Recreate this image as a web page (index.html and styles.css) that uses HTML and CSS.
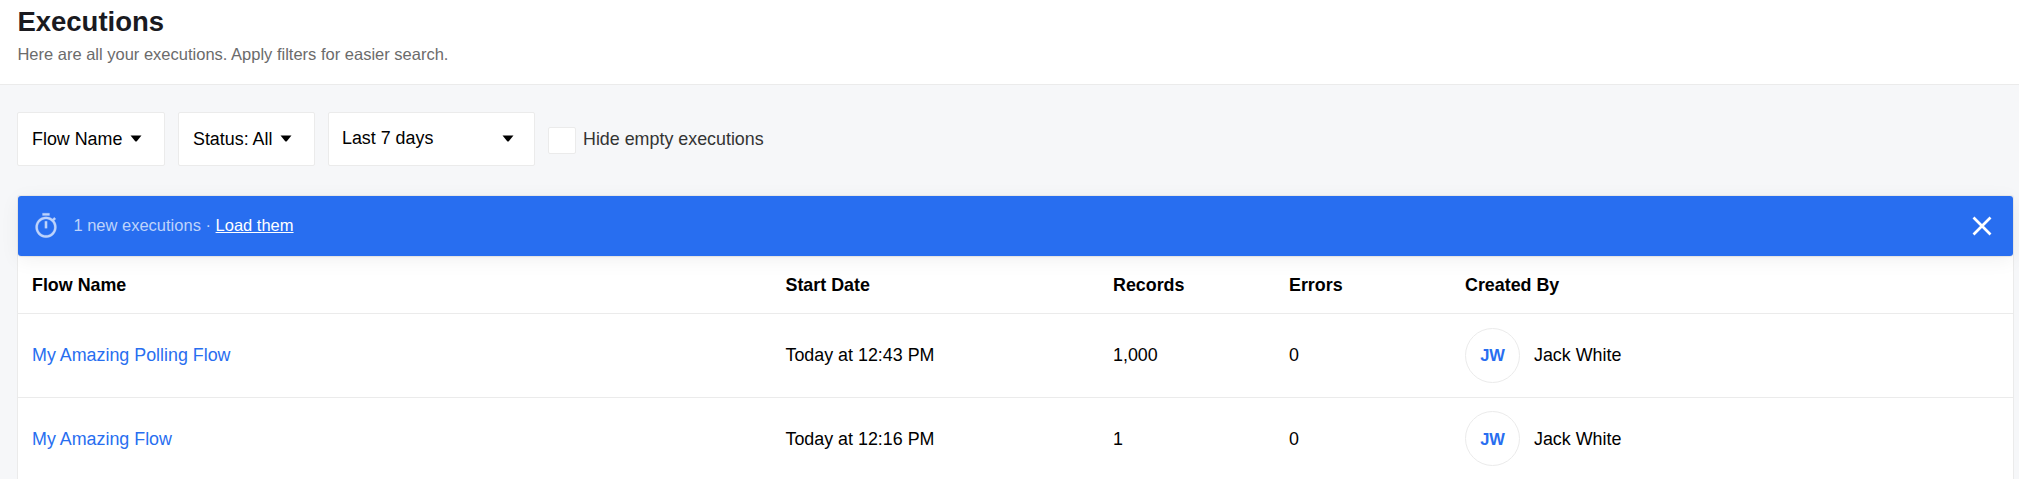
FILE: index.html
```html
<!DOCTYPE html>
<html lang="en">
<head>
<meta charset="utf-8">
<title>Executions</title>
<link rel="stylesheet" href="styles.css">
</head>
<body>
<header class="page-header">
  <h1 class="title">Executions</h1>
  <p class="subtitle">Here are all your executions. Apply filters for easier search.</p>
</header>
<main class="content">
  <div class="filters">
    <button class="filter filter-flow">Flow Name<svg class="caret" viewBox="0 0 12 7"><path d="M.5 .5h11L7 6Q6 7 5 6z"/></svg></button>
    <button class="filter filter-status">Status: All<svg class="caret" viewBox="0 0 12 7"><path d="M.5 .5h11L7 6Q6 7 5 6z"/></svg></button>
    <button class="filter filter-period"><span class="period">Last 7 days</span><svg class="caret" viewBox="0 0 12 7"><path d="M.5 .5h11L7 6Q6 7 5 6z"/></svg></button>
    <label class="toggle"><span class="box"></span>Hide empty executions</label>
  </div>
  <section class="panel">
    <div class="banner">
      <svg class="timer" viewBox="0 0 24 24"><path d="M15 1H9v2h6V1zm-4 13h2V8h-2v6zm8.03-6.61l1.42-1.42c-.43-.51-.9-.99-1.41-1.41l-1.42 1.42C16.07 4.74 14.12 4 12 4c-4.97 0-9 4.03-9 9s4.02 9 9 9 9-4.03 9-9c0-2.120-.74-4.070-1.97-5.610zM12 20c-3.870 0-7-3.130-7-7s3.130-7 7-7 7 3.130 7 7-3.130 7-7 7z"/></svg>
      <span class="message">1 new executions · <a class="load">Load them</a></span>
      <svg class="close" viewBox="0 0 20 20"><path d="M1.500 1.500l17 17M18.500 1.500l-17 17"/></svg>
    </div>
    <div class="row head">
      <span>Flow Name</span><span>Start Date</span><span>Records</span><span>Errors</span><span>Created By</span>
    </div>
    <div class="row">
      <a class="cell flow">My Amazing Polling Flow</a><span class="cell">Today at 12:43 PM</span><span class="cell">1,000</span><span class="cell">0</span>
      <span class="user"><span class="avatar">JW</span><span class="cell">Jack White</span></span>
    </div>
    <div class="row last">
      <a class="cell flow">My Amazing Flow</a><span class="cell">Today at 12:16 PM</span><span class="cell">1</span><span class="cell">0</span>
      <span class="user"><span class="avatar">JW</span><span class="cell">Jack White</span></span>
    </div>
  </section>
</main>
</body>
</html>
```
FILE: styles.css
```css
* { box-sizing: border-box; }
body {
  margin: 0;
  background: #f6f7f9;
  color: #000;
  font: 17.875px/22px "Liberation Sans", Arial, sans-serif;
}
.page-header {
  height: 85px;
  padding: 5px 17px 0 17.4px;
  background: #fff;
  border-bottom: 1px solid #ebebeb;
}
.title {
  margin: 0;
  color: #1a1a1f;
  font-size: 27.5px;
  line-height: 33px;
}
.subtitle {
  margin: 6px 0 0;
  color: #6b6b6b;
  font-size: 16.5px;
  line-height: 20px;
}
.content { padding: 27px 5px 0 17px; }
.filters { display: flex; gap: 13px; height: 54px; }
.filter {
  display: flex;
  align-items: center;
  padding: 0 14px;
  background: #fff;
  border: 1px solid #ebebeb;
  border-radius: 2px;
  color: #000;
  font: inherit;
}
.filter-flow { width: 148px; }
.filter-status { width: 137px; }
.filter-period { width: 207px; padding: 0 20.5px 0 13px; justify-content: space-between; }
.period { margin-top: -2px; }
.caret { width: 12px; height: 7px; margin: -1px 0 0 8px; }
.toggle { display: flex; align-items: center; gap: 7px; color: #333; }
.box {
  width: 28px;
  height: 27px;
  margin-top: 3px;
  background: #fff;
  border: 1px solid #ebebeb;
  border-radius: 2px;
}
.panel {
  margin-top: 29px;
  background: #fff;
  border: 1px solid #ebebeb;
  border-bottom: 0;
  border-radius: 3px 3px 0 0;
}
.banner {
  display: flex;
  align-items: center;
  height: 60px;
  padding: 0 21px 0 14px;
  background: #286ef0;
  border-radius: 3px;
  box-shadow: 0 1px 1px rgba(0, 0, 0, .08), 0 4px 20px rgba(0, 0, 0, .06);
  color: #bed3fb;
  font-size: 16.5px;
}
.timer { width: 28px; height: 28px; margin-top: -1px; fill: #bed3fb; stroke: #bed3fb; stroke-width: .2; }
.message { margin: -2px 0 0 13.4px; }
.load { color: #fff; text-decoration: underline; }
.close { width: 20px; height: 20px; margin: -1px 0 0 auto; fill: none; stroke: #fff; stroke-width: 2.700; }
.row {
  display: grid;
  grid-template-columns: 753.5px 327.500px 176px 176px 1fr;
  align-items: center;
  height: 84px;
  padding-left: 14px;
  border-bottom: 1px solid #ebebeb;
}
.head { height: 58px; font-weight: 700; }
.cell { margin-top: -1px; }
.last { height: 81px; border-bottom: 0; }
.last .cell { margin-top: 1px; }
.flow { color: #286ef0; }
.user { display: flex; align-items: center; gap: 14px; }
.avatar {
  display: flex;
  align-items: center;
  justify-content: center;
  width: 55px;
  height: 55px;
  padding-bottom: 2px;
  border: 1px solid #ebebeb;
  border-radius: 50%;
  color: #286ef0;
  font-size: 16.5px;
  font-weight: 700;
}
.last .avatar { padding-bottom: 0; }
```
